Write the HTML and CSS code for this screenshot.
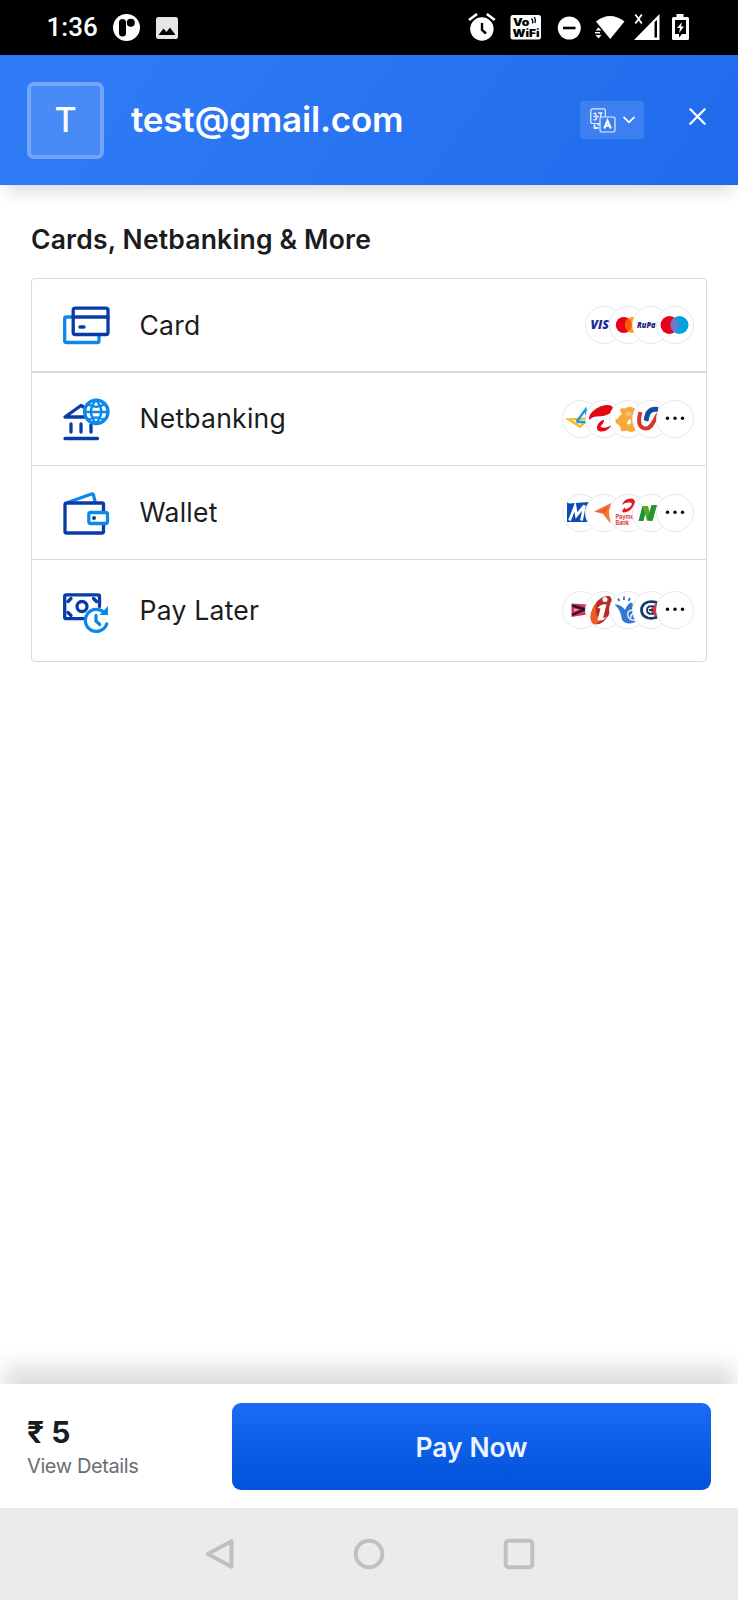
FILE: index.html
```html
<!DOCTYPE html>
<html lang="en">
<head>
<meta charset="utf-8">
<title>Checkout</title>
<link rel="stylesheet" href="styles.css">
</head>
<body>
<div class="screen">
  <div class="status">
    <span class="clock">1:36</span>
    <svg class="st-app" width="27" height="27" viewBox="0 0 27 27"><circle cx="13.5" cy="13.5" r="13.5" fill="#fff"/><rect x="6" y="5" width="7" height="17.5" rx="3.5"/><circle cx="17.8" cy="8.8" r="4"/></svg>
    <svg class="st-pic" width="22" height="22" viewBox="0 0 22 22"><rect width="22" height="22" rx="2.5" fill="#e6e6e6"/><path d="M2.5 18 7.5 11.5 10.5 15 14 10.5 19.5 18Z"/></svg>
    <span class="grow"></span>
    <svg class="st-right" width="224" height="28" viewBox="0 0 224 28">
      <g fill="#fff">
        <circle cx="13.900" cy="16" r="11.700"/>
        <path d="M1 7 9 1M18.800 1l8 6" stroke="#fff" stroke-width="2.600" fill="none"/>
        <path d="M14 10V17l4 3.500" stroke="#000" stroke-width="2.400" fill="none"/>
        <rect x="42.500" y="2" width="30.500" height="24.500" rx="2.500"/>
        <circle cx="101.300" cy="15" r="11.500"/>
        <path d="M95 15h12.500" stroke="#000" stroke-width="2.600"/>
        <path d="M128 8.500Q142-2.500 156.500 8.500L142.200 26Z"/>
        <path d="M127.500 17.500l3-3 3 3zM127.500 22l3 3.500 3-3.500zM127 19h5v1.500h-5z"/>
        <path d="M166 27 191.500 1V27Z"/>
        <path d="M186.500 9v15.500h2.500V7Z" fill="#000"/>
        <path d="M167.300 1.500l6.500 9M173.800 1.500l-6.500 9" stroke="#fff" stroke-width="1.800"/>
        <path d="M208.500 1h7v3h4q1.500 0 1.500 1.500v20q0 1.500-1.500 1.500h-14q-1.500 0-1.500-1.500v-20q0-1.500 1.500-1.500h3z"/>
        <path d="M207 7h11v14h-4l-3 3.500V21h-4z" fill="#000"/>
        <path d="M214 9l-5 6h3l-1 5 5-6.500h-3z"/>
      </g>
      <g font-family="Inter, sans-serif" font-weight="900" fill="#000"><text x="45" y="12.500" font-size="10" textLength="16.500" lengthAdjust="spacingAndGlyphs">Vo</text><text x="44.500" y="24.300" font-size="10.500" textLength="27" lengthAdjust="spacingAndGlyphs">WiFi</text></g>
      <path d="M63.500 5.500q2 2 1 5M66.500 4q1.500 3 .5 6" stroke="#000" stroke-width="1.300" fill="none"/>
    </svg>
  </div>

  <header class="header">
    <div class="avatar">T</div>
    <div class="email">test@gmail.com</div>
    <div class="lang">
      <svg width="26" height="25" viewBox="0 0 26 25" fill="none" stroke="#e6efff" stroke-width="1.200"><path d="M10 15.500H2.500Q.8 15.500.8 14V2.500Q.8.900 2.500.900h11Q15.300.900 15.300 2.500V8.500"/><rect x="10" y="9" width="15" height="15" rx="1.500"/><path d="M3.500 6q2.500-2 2.500.8T4.500 8.500q2.500 0 2 2t-3 1M7 8.500h2M8 5h4.500M10.800 5v4" stroke-width="1.400"/><path d="M4.500 16.500V20H8.500M7.500 16.500h2" stroke-width="1.800"/><path d="M14.200 20.500l3.300-8 3.300 8M15.500 17.800h4" stroke="#fff" stroke-width="2"/></svg>
      <svg width="12" height="8" viewBox="0 0 12 8" fill="none" stroke="#fff" stroke-width="1.700" stroke-linecap="round"><path d="M1 1.300l5 5 5-5"/></svg>
    </div>
    <svg class="close" width="17" height="17" viewBox="0 0 17 17" stroke="#fff" stroke-width="2.200" stroke-linecap="round"><path d="M1.300 1.300 15.700 15.700M15.700 1.300 1.300 15.700"/></svg>
  </header>

  <main class="content">
    <h1 class="title">Cards, Netbanking &amp; More</h1>
    <div class="methods">
      <div class="row">
        <svg class="ico" viewBox="0 0 48 48"><path d="M10 16H4.200Q2.700 16 2.700 17.500V40Q2.700 41.500 4.200 41.500H35.500Q37 41.500 37 40V34" class="lt"/><rect x="11.200" y="7.200" width="34.800" height="26.300" rx="2" class="dk"/><path d="M11 16H46M18 26h4" class="dk"/></svg>
        <span class="name">Card</span>
        <div class="logos">
          <svg viewBox="0 0 38 38"><circle class="ring" cx="19" cy="19" r="18.500"/><text x="5.500" y="23.300" class="visa" textLength="18.500" lengthAdjust="spacingAndGlyphs">VIS</text></svg>
          <svg viewBox="0 0 38 38"><circle class="ring" cx="19" cy="19" r="18.500"/><circle cx="14.800" cy="19" r="8" fill="#eb001b"/><circle cx="24" cy="19" r="8" fill="#f79e1b"/><path d="M19.400 12.500a8 8 0 0 1 0 13 8 8 0 0 1 0-13" fill="#ff5f00"/></svg>
          <svg viewBox="0 0 38 38"><circle class="ring" cx="19" cy="19" r="18.500"/><text x="5" y="21.500" class="rupay" textLength="18.500" lengthAdjust="spacingAndGlyphs">RuPa</text></svg>
          <svg viewBox="0 0 38 38"><circle class="ring" cx="19" cy="19" r="18.500"/><circle cx="13.500" cy="19" r="9" fill="#eb001b"/><circle cx="23.500" cy="19" r="9" fill="#00a2e0"/><path d="M18.500 11.500a9 9 0 0 1 0 15 9 9 0 0 1 0-15" fill="#7375cf"/></svg>
        </div>
      </div>
      <div class="row">
        <svg class="ico" viewBox="0 0 48 48"><path d="M23 22H3L19 10.500 21.500 12M9 29V37M19 29V37M29 30V37M3 43.500H35.500" class="dk"/><circle cx="34.300" cy="16.800" r="11.700" class="lt"/><path d="M22.500 17H46M26 9.500Q34 14 42.500 9.500M26 24.500Q34 20.500 42.500 24.500M34 5Q24 16.500 34 28.500Q44.500 16.500 34 5" class="lt thin"/></svg>
        <span class="name">Netbanking</span>
        <div class="logos">
          <svg viewBox="0 0 38 38"><circle class="ring" cx="19" cy="19" r="18.500"/><path d="M26 18.500 7 19.500 18 26.500 24 21" stroke="#f4bd2d" stroke-width="2.600" fill="none"/><path d="M14.500 22 23.500 9.500 26.500 25.500M14.500 22h11" stroke="#1c9dd9" stroke-width="2.400" fill="none"/></svg>
          <svg viewBox="0 0 38 38"><circle class="ring" cx="19" cy="19" r="18.500"/><path d="M4.500 20C2 13 14 5 23 5C31 5.500 29 13 20 15.500C14 17.500 9 14.500 4.500 20Z" fill="#e30613"/><path d="M18 20C11 23 10 31 15.500 31.500 21 32 25 28 27 24.500 22 28.500 18 28.500 15.500 26.500 19 22.500 20 20 18 20" fill="#e30613"/></svg>
          <svg viewBox="0 0 38 38"><circle class="ring" cx="19" cy="19" r="18.500"/><path d="M13 14Q8 7 16 8.500 20 5 26 8.500L26 31Q21 33 18 30.500 10 33 12 28 9 24 7 23 5 18 9 19 10 15 13 14Z" fill="#f9a93a"/><path d="M16.500 12.500q3-2 6 0l-.5 3.500h-5z" fill="#fbc172"/><path d="M18 24Q19 18 22 20 22 26 18 24" fill="#fff"/></svg>
          <svg viewBox="0 0 38 38"><circle class="ring" cx="19" cy="19" r="18.500"/><path d="M8.500 12Q4 28 14 28.500C20 28.500 22 20 26 14" stroke="#d9352b" stroke-width="4" fill="none"/><path d="M14 21L15 16Q17 8 26 9.500" stroke="#154f9c" stroke-width="5" fill="none"/><path d="M12 20q-.5 4 2.500 4 3 0 4.500-9" stroke="#fff" stroke-width="1.300" fill="none"/></svg>
          <svg viewBox="0 0 38 38" class="more"><circle class="ring" cx="19" cy="19" r="18.500"/><circle cx="11.500" cy="18.300" r="1.700"/><circle cx="19" cy="18.300" r="1.700"/><circle cx="26.500" cy="18.300" r="1.700"/></svg>
        </div>
      </div>
      <div class="row">
        <svg class="ico" viewBox="0 0 48 48"><path d="M7 13 29.500 5Q31 4.500 31.500 6L33.200 13.500" class="lt"/><path d="M41.500 23V15.500Q41.500 14 40 14H4.500Q3 14 3 15.500V42.500Q3 44 4.500 44H40Q41.500 44 41.500 42.500V36" class="dk"/><rect x="26.800" y="23.500" width="18.700" height="11" rx="2" class="lt"/><circle cx="32" cy="29" r="2" fill="#073ba8"/></svg>
        <span class="name">Wallet</span>
        <div class="logos">
          <svg viewBox="0 0 38 38"><circle class="ring" cx="19" cy="19" r="18.500"/><path d="M5 9Q5 8 7 9.500L27 8V28H5Z" fill="#0b4db5"/><path d="M7.500 26.500 13 12.500 14.500 21.500 22.500 11.500 19.500 26.500" stroke="#fff" stroke-width="2.800" fill="none"/></svg>
          <svg viewBox="0 0 38 38"><circle class="ring" cx="19" cy="19" r="18.500"/><path d="M9 17.500 26 9 24 19 25.500 29.500 18 20Z" fill="#f4773b"/><path d="M12 17.500 24 12 20 19Z" fill="#e86228"/></svg>
          <svg viewBox="0 0 38 38"><circle class="ring" cx="19" cy="19" r="18.500"/><path d="M13 11Q15 4 23 4.500 28 6 24.500 12 21 18 15 18.500 11 18 16 13 15 17 21 13 25 8 20 8.500 16 8 13 11Z" fill="#e11b22"/><text x="6.500" y="25" class="bank" textLength="18.500" lengthAdjust="spacingAndGlyphs">Payme</text><text x="6.500" y="31.300" class="bank" textLength="13.500" lengthAdjust="spacingAndGlyphs">Bank</text></svg>
          <svg viewBox="0 0 38 38"><circle class="ring" cx="19" cy="19" r="18.500"/><path d="M6.500 27 10.500 12H15L11.500 27Z" fill="#16923a"/><path d="M10.500 12H16L20 26.500H15Z" fill="#5aa925"/><path d="M15 26.500 19.500 11H25L20.500 27Z" fill="#1f962e"/></svg>
          <svg viewBox="0 0 38 38" class="more"><circle class="ring" cx="19" cy="19" r="18.500"/><circle cx="11.500" cy="18.300" r="1.700"/><circle cx="19" cy="18.300" r="1.700"/><circle cx="26.500" cy="18.300" r="1.700"/></svg>
        </div>
      </div>
      <div class="row last">
        <svg class="ico" viewBox="0 0 48 48"><path d="M22 32.700H4.200Q2.700 32.700 2.700 31.200V10.300Q2.700 8.800 4.200 8.800H36Q37.500 8.800 37.500 10.300V20.500" class="dk"/><circle cx="20" cy="20.500" r="5" class="dk"/><path d="M6 15.500 9 12.500M31.500 12.500l3 3M6 26.500 9 29.500" class="dk"/><path d="M44.700 38A11 11 0 1 1 42.500 27" class="lt"/><path d="M46 20V29H37.500Z" fill="#0c89e8"/><path d="M34 29.500V35L37.800 38.500" class="lt"/></svg>
        <span class="name">Pay Later</span>
        <div class="logos">
          <svg viewBox="0 0 38 38"><circle class="ring" cx="19" cy="19" r="18.500"/><path d="M9.500 12.500 25 13.500V23.500L9.500 26Z" fill="#dc315d"/><path d="M10 14.500 23 18.300 10 24" stroke="#20172f" stroke-width="2.400" fill="none"/><path d="M12 17.500l5 1-5 2z" fill="#f7a0b0"/></svg>
          <svg viewBox="0 0 38 38"><circle class="ring" cx="19" cy="19" r="18.500"/><path d="M6 29C4 21 12 4 24 5 30 7 27 28 14 33 8 34 7 32 6 29Z" fill="#b62b27"/><path d="M6 29C4 25 8 15 12 11Q8 24 16 28 13 34 8 33Z" fill="#f15a24"/><path d="M12.500 17Q17 12 21.500 13.500L18 27 22 26Q17 31 12.500 29L15.500 17.500Z" fill="#fff"/><circle cx="20" cy="8.500" r="2.500" fill="#fff"/></svg>
          <svg viewBox="0 0 38 38"><circle class="ring" cx="19" cy="19" r="18.500"/><path d="M5.500 13.500Q12 13 16 19 18 13 22 11.500 25 12 23.500 17L26 31Q18 35 13 29 12 19 5.500 13.500Z" fill="#3478d5"/><path d="M25 19q-8 0-6 6 2 5 7 4M25 23q-4 0-3 4" stroke="#fff" stroke-width="1.300" fill="none"/><path d="M10.500 10 9 7.500M15 9V5.500M19.500 10l1.500-3" stroke="#3478d5" stroke-width="1.800"/></svg>
          <svg viewBox="0 0 38 38"><circle class="ring" cx="19" cy="19" r="18.500"/><path d="M25 11 18 19 25 28Z" fill="#d93645"/><path d="M25 11.500Q20 10 16 11 9.500 13 9.500 19T16 27Q21 28 25 26" stroke="#153b6b" stroke-width="2.800" fill="none"/><path d="M22 15.500Q15 14 15 19T22 22.500M17 19h4" stroke="#153b6b" stroke-width="2" fill="none"/></svg>
          <svg viewBox="0 0 38 38" class="more"><circle class="ring" cx="19" cy="19" r="18.500"/><circle cx="11.500" cy="18.300" r="1.700"/><circle cx="19" cy="18.300" r="1.700"/><circle cx="26.500" cy="18.300" r="1.700"/></svg>
        </div>
      </div>
    </div>
  </main>

  <footer class="footer">
    <div class="total"><div class="amount">₹ 5</div><div class="details">View Details</div></div>
    <button class="pay">Pay Now</button>
  </footer>

  <nav class="nav">
    <svg width="32" height="34" viewBox="0 0 32 34"><path d="M3.800 17 27.500 4.200V29.800Z"/></svg>
    <svg width="34" height="34" viewBox="0 0 34 34"><circle cx="17" cy="17" r="13.300"/></svg>
    <svg width="34" height="34" viewBox="0 0 34 34"><rect x="3.700" y="3.700" width="26.600" height="26.600" rx="3"/></svg>
  </nav>
</div>
</body>
</html>
```

FILE: styles.css
```css
* { box-sizing: border-box; }
body { margin: 0; background: #fff; font-family: Inter, "Noto Sans", sans-serif; color: #1b1c20; }
svg { display: block; flex: none; }
.screen { width: 738px; height: 1600px; display: flex; flex-direction: column; overflow: hidden; }
.grow { flex: 1; }

.status { height: 55px; flex: none; background: #000; display: flex; align-items: center; padding: 0 46px 0 46.500px; }
.clock { font: 500 26px/30px Roboto, sans-serif; color: #fff; width: 66.500px; padding-bottom: 1px; }
.st-pic { margin-left: 16px; }
.st-right { margin-bottom: 1px; }

.header {
  position: relative; height: 130px; flex: none; display: flex; align-items: center; padding: 0 32px 0 27px;
  background: linear-gradient(125deg, #317cf6, #206bec);
  box-shadow: 0 12px 16px -6px rgba(20, 30, 30, .16);
}
.avatar {
  width: 77px; height: 77px; border: 4px solid rgba(255, 255, 255, .24); border-radius: 7px;
  background: rgba(255, 255, 255, .12);
  display: flex; align-items: center; justify-content: center;
  color: #fff; font-size: 34px; line-height: 40px; font-weight: 500; padding-bottom: 1px;
}
.email { margin-left: 27px; padding-bottom: 2px; color: #fff; font-weight: 600; font-size: 35px; line-height: 42px; letter-spacing: -.22px; flex: 1; white-space: nowrap; }
.lang {
  width: 64px; height: 38px; border-radius: 4px; background: rgba(255, 255, 255, .12);
  display: flex; align-items: center; gap: 7px; padding-left: 9.500px; margin-right: 45px;
}
.close { margin-bottom: 7px; }

.content { flex: 1; padding: 36px 31px 0; }
.title { margin: 0; font-size: 26.500px; line-height: 36px; font-weight: 600; letter-spacing: .18px; }
.methods { margin-top: 21px; border: 1.500px solid #d9dadb; border-radius: 4px; width: 676px; }
.row { height: 94px; display: flex; align-items: center; border-bottom: 1px solid #d8d9d9; padding: 0 12px 0 30px; }
.row:first-child { border-bottom-width: 2px; }
.row:nth-child(2) { height: 93px; padding-bottom: 1px; }
.row.last { height: 101px; border-bottom: 0; padding-bottom: 1px; }
.ico { width: 48px; height: 48px; fill: none; }
.dk, .lt { fill: none; stroke: #073ba8; stroke-width: 3.300; stroke-linecap: round; stroke-linejoin: round; }
.lt { stroke: #0c89e8; }
.thin { stroke-width: 2.300; }
.name { margin-left: 29.500px; flex: 1; font-size: 26.500px; line-height: 36px; letter-spacing: .25px; padding-bottom: 1px; }
.logos { display: flex; }
.logos svg { width: 38px; height: 38px; }
.logos svg + svg { margin-left: -14.400px; }
.ring { fill: #fff; stroke: #e6e8ec; stroke-width: 1; }
.visa { font: italic 800 12px "Open Sans", sans-serif; fill: #1a2b94; }
.rupay { font: italic 800 8px "Open Sans", sans-serif; fill: #25247b; }
.bank { font: 700 5.500px Inter, sans-serif; fill: #e13840; }

.footer {
  position: relative; height: 124px; flex: none; background: #fff; display: flex; align-items: center;
  justify-content: space-between; padding: 0 27px; box-shadow: 0 -22px 20px -4px rgba(10, 25, 20, .14);
}
.total { padding-top: 6px; }
.amount { font-size: 30px; line-height: 34px; font-weight: 700; }
.details { font-size: 20px; line-height: 34px; letter-spacing: -.4px; color: #6b6d72; }
.pay {
  width: 479px; height: 87px; border: 0; border-radius: 9px; background: linear-gradient(#1b6bf5, #0052d9);
  color: #edf4ff; font: 600 26.500px/32px Inter, sans-serif; padding-top: 3px;
}
.nav { position: relative; height: 92px; flex: none; background: #ebebeb; display: flex; align-items: center; justify-content: center; gap: 116px; padding-left: 2px; }
.nav svg { fill: none; stroke: #c0c0c0; stroke-width: 4; stroke-linejoin: round; }
```
